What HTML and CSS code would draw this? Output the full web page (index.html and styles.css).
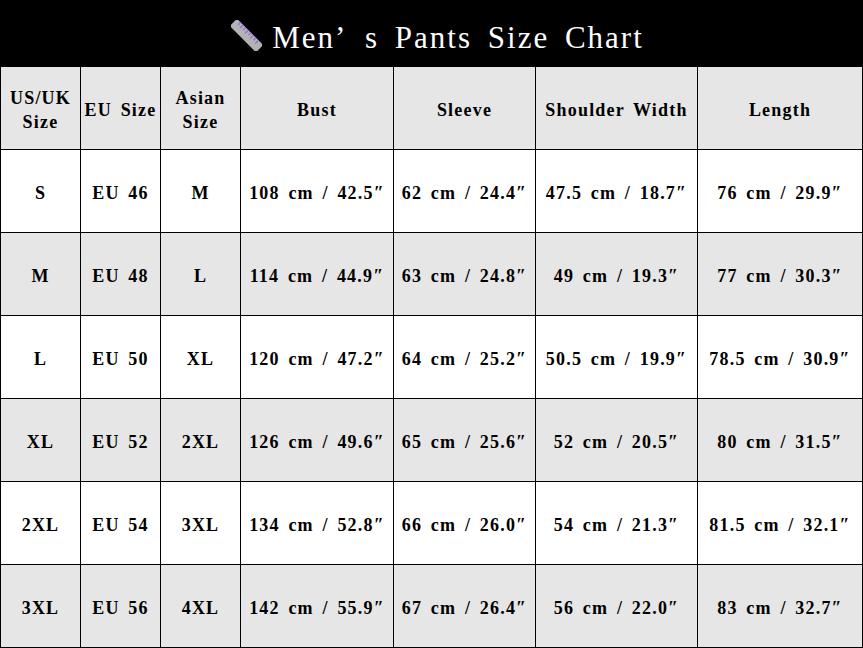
FILE: index.html
```html
<!DOCTYPE html>
<html>
<head>
<meta charset="utf-8">
<link rel="stylesheet" href="styles.css">
</head>
<body>
<div class="page">
  <header class="title-bar">
    <svg class="ruler" viewBox="0 0 30 30" width="31" height="31" aria-hidden="true">
      <g transform="rotate(45 15 15)">
        <rect x="-3" y="10" width="36" height="10" rx="2.5" fill="#b3b3b3"/>
        <g stroke="#9a6fe0" stroke-width="1.4" stroke-linecap="round">
          <line x1="2" y1="10.5" x2="2" y2="13"/>
          <line x1="5.5" y1="10.5" x2="5.5" y2="14"/>
          <line x1="9" y1="10.5" x2="9" y2="13"/>
          <line x1="12.5" y1="10.5" x2="12.5" y2="14"/>
          <line x1="16" y1="10.5" x2="16" y2="13"/>
          <line x1="19.5" y1="10.5" x2="19.5" y2="14"/>
          <line x1="23" y1="10.5" x2="23" y2="13"/>
          <line x1="26.5" y1="10.5" x2="26.5" y2="14"/>
        </g>
      </g>
    </svg>
    <h1 class="title">Men<span class="fw">’</span>s Pants Size Chart</h1>
  </header>
  <div class="chart">
    <div class="cell head">US/UK<br>Size</div>
    <div class="cell head">EU Size</div>
    <div class="cell head">Asian<br>Size</div>
    <div class="cell head">Bust</div>
    <div class="cell head">Sleeve</div>
    <div class="cell head">Shoulder Width</div>
    <div class="cell head">Length</div>

    <div class="cell">S</div>
    <div class="cell">EU 46</div>
    <div class="cell">M</div>
    <div class="cell">108 cm / 42.5″</div>
    <div class="cell">62 cm / 24.4″</div>
    <div class="cell">47.5 cm / 18.7″</div>
    <div class="cell">76 cm / 29.9″</div>

    <div class="cell alt">M</div>
    <div class="cell alt">EU 48</div>
    <div class="cell alt">L</div>
    <div class="cell alt">114 cm / 44.9″</div>
    <div class="cell alt">63 cm / 24.8″</div>
    <div class="cell alt">49 cm / 19.3″</div>
    <div class="cell alt">77 cm / 30.3″</div>

    <div class="cell">L</div>
    <div class="cell">EU 50</div>
    <div class="cell">XL</div>
    <div class="cell">120 cm / 47.2″</div>
    <div class="cell">64 cm / 25.2″</div>
    <div class="cell">50.5 cm / 19.9″</div>
    <div class="cell">78.5 cm / 30.9″</div>

    <div class="cell alt">XL</div>
    <div class="cell alt">EU 52</div>
    <div class="cell alt">2XL</div>
    <div class="cell alt">126 cm / 49.6″</div>
    <div class="cell alt">65 cm / 25.6″</div>
    <div class="cell alt">52 cm / 20.5″</div>
    <div class="cell alt">80 cm / 31.5″</div>

    <div class="cell">2XL</div>
    <div class="cell">EU 54</div>
    <div class="cell">3XL</div>
    <div class="cell">134 cm / 52.8″</div>
    <div class="cell">66 cm / 26.0″</div>
    <div class="cell">54 cm / 21.3″</div>
    <div class="cell">81.5 cm / 32.1″</div>

    <div class="cell alt">3XL</div>
    <div class="cell alt">EU 56</div>
    <div class="cell alt">4XL</div>
    <div class="cell alt">142 cm / 55.9″</div>
    <div class="cell alt">67 cm / 26.4″</div>
    <div class="cell alt">56 cm / 22.0″</div>
    <div class="cell alt">83 cm / 32.7″</div>
  </div>
</div>
</body>
</html>
```
FILE: styles.css
```css
html, body {
  margin: 0;
  padding: 0;
  background: #ffffff;
}

.page {
  width: 863px;
  height: 648px;
  overflow: hidden;
  font-family: "Liberation Serif", "DejaVu Serif", serif;
}

.title-bar {
  height: 66px;
  background: #000000;
  display: flex;
  align-items: center;
  justify-content: center;
  gap: 10px;
  padding-top: 8px;
  padding-left: 12px;
  box-sizing: border-box;
}

.ruler {
  display: block;
  flex: none;
  margin-top: -4px;
}

.title {
  margin: 0;
  color: #ffffff;
  font-weight: normal;
  font-size: 31px;
  letter-spacing: 2px;
  word-spacing: 6px;
  line-height: 1;
  white-space: nowrap;
}

.fw {
  display: inline-block;
  width: 30px;
  text-align: left;
}

.chart {
  display: grid;
  grid-template-columns: 79px 79px 79px 152px 141px 161px 164px;
  grid-auto-rows: 82px;
  gap: 1px;
  padding: 1px;
  background: #000000;
}

.cell {
  background: #ffffff;
  color: #000000;
  font-weight: bold;
  font-size: 18px;
  letter-spacing: 1.2px;
  word-spacing: 3px;
  line-height: 24px;
  display: flex;
  align-items: center;
  justify-content: center;
  text-align: center;
  white-space: nowrap;
  padding-top: 4px;
  box-sizing: border-box;
}

.head,
.alt {
  background: #e6e6e6;
}
```
